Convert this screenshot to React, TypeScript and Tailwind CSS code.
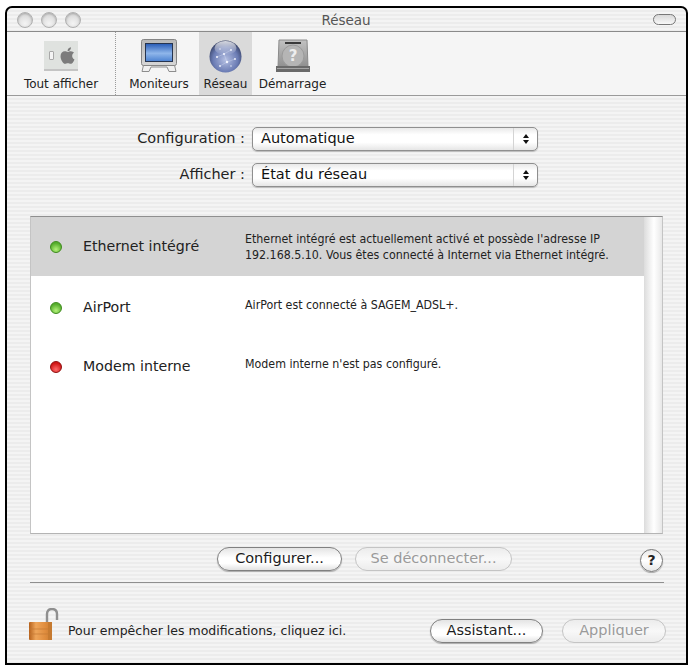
import React from "react";
import { FaApple } from "react-icons/fa";

const stripes = "bg-[repeating-linear-gradient(180deg,#f4f4f4_0px,#f4f4f4_2px,#ececec_2px,#ececec_4px)]";
const lucida = "font-['DejaVu_Sans',sans-serif]";

const TrafficDot = () => (
  <span className="w-[16px] h-[16px] rounded-full border border-[#b0b0b0] bg-[radial-gradient(circle_at_50%_75%,#f4f4f4,#cfcfcf)] shadow-[inset_0_1px_2px_#a8a8a8]" />
);

const PrefsIcon = () => (
  <div className="mb-[2px] w-[34px] h-[30px] bg-[#dfe2df] border-b-2 border-[#c4c4c4] flex items-center gap-[4px] pl-[5px]">
    <div className="w-[5px] h-[9px] border border-[#a8a8a8] bg-[#f4f4f4] rounded-[1px]" />
    <FaApple className="text-[#7c7c7c] w-[19px] h-[19px]" />
  </div>
);

const MonitorIcon = () => (
  <svg width="36" height="34" viewBox="0 0 36 34">
    <defs>
      <linearGradient id="scr" x1="0" y1="0" x2="0" y2="1">
        <stop offset="0" stopColor="#2c5fb8" />
        <stop offset="0.55" stopColor="#8fb6ea" />
        <stop offset="1" stopColor="#4f84d2" />
      </linearGradient>
      <linearGradient id="frm" x1="0" y1="0" x2="0" y2="1">
        <stop offset="0" stopColor="#b8b8b8" />
        <stop offset="1" stopColor="#d6d6d6" />
      </linearGradient>
    </defs>
    <path d="M3 24 L1 32.5 L8 32.5 L10 28 L26 28 L28 32.5 L35 32.5 L33 24 Z" fill="#f0f0f0" stroke="#8d8d8d" />
    <rect x="0.5" y="0.5" width="35" height="26" rx="2" fill="url(#frm)" stroke="#858585" />
    <rect x="4" y="4" width="28" height="19" fill="#26344f" />
    <rect x="5" y="5" width="26" height="17" fill="url(#scr)" />
  </svg>
);

const GlobeIcon = () => (
  <svg width="33" height="33" viewBox="0 0 33 33">
    <defs>
      <radialGradient id="glb" cx="0.5" cy="0.6" r="0.6">
        <stop offset="0" stopColor="#b4bfe2" />
        <stop offset="0.65" stopColor="#6b7cb4" />
        <stop offset="1" stopColor="#343e62" />
      </radialGradient>
      <linearGradient id="gls" x1="0" y1="0" x2="0" y2="1">
        <stop offset="0" stopColor="#fff" stopOpacity="0.8" />
        <stop offset="1" stopColor="#fff" stopOpacity="0" />
      </linearGradient>
    </defs>
    <circle cx="16.5" cy="16.5" r="16" fill="url(#glb)" />
    <ellipse cx="16.5" cy="8" rx="11" ry="7" fill="url(#gls)" />
    <path d="M8 17 L15 14 L22 10 M15 14 L18 22 L26 19 M18 22 L11 26" stroke="#e4e9fb" strokeWidth="0.3" fill="none" />
    <g fill="#f4f6ff">
      <circle cx="8" cy="17" r="1" />
      <circle cx="15" cy="14" r="1.1" />
      <circle cx="22" cy="10" r="0.9" />
      <circle cx="18" cy="22" r="1.2" />
      <circle cx="26" cy="19" r="0.9" />
      <circle cx="11" cy="26" r="0.9" />
      <circle cx="22" cy="26" r="0.7" />
      <circle cx="11" cy="9" r="0.7" />
    </g>
  </svg>
);

const DiskIcon = () => (
  <svg width="34" height="34" viewBox="0 0 34 34">
    <defs>
      <linearGradient id="dsk" x1="0" y1="0" x2="0" y2="1">
        <stop offset="0" stopColor="#c2c2c2" />
        <stop offset="1" stopColor="#8f8f8f" />
      </linearGradient>
    </defs>
    <path d="M3 1 L31 1 L32 28 L2 28 Z" fill="url(#dsk)" stroke="#8a8a8a" />
    <rect x="9" y="3" width="16" height="2" fill="#3a3a3a" />
    <circle cx="17" cy="17" r="11" fill="#b5b5b5" stroke="#9a9a9a" />
    <path d="M0 27 L34 27 L34 33 L0 33 Z" fill="#6a6a6a" />
    <path d="M1 29.5 L33 29.5" stroke="#a5a5a5" />
    <text x="17" y="22" textAnchor="middle" fontSize="15" fontWeight="700" fill="#ededed" fontFamily="DejaVu Sans, sans-serif">?</text>
  </svg>
);

const LockIcon = () => (
  <svg width="33" height="34" viewBox="0 0 33 34">
    <defs>
      <linearGradient id="brass" x1="0" y1="0" x2="1" y2="0">
        <stop offset="0" stopColor="#b5611c" />
        <stop offset="0.3" stopColor="#eea55a" />
        <stop offset="0.7" stopColor="#e08d3e" />
        <stop offset="1" stopColor="#c97a30" />
      </linearGradient>
    </defs>
    <path d="M19 16 L19 6 Q19 1 24 1 Q29 1 29 6 L29 12" fill="none" stroke="#8f8f8f" strokeWidth="2.4" />
    <rect x="1" y="14" width="23" height="18" rx="1" fill="url(#brass)" />
    <path d="M1 21 H24 M1 26 H24" stroke="#c47a35" strokeWidth="0.7" />
    <rect x="20" y="14" width="4" height="18" fill="#c67a30" />
  </svg>
);

const Tool = ({ width, label, icon, active }: { width: string; label: string; icon: React.ReactNode; active?: boolean }) => (
  <div className={`${width} h-full flex flex-col items-center ${active ? "bg-[#dadada]" : ""}`}>
    <div className="h-[41px] flex items-end justify-center">{icon}</div>
    <span className="mt-[4px] text-[12px] leading-[14px] text-[#222] whitespace-nowrap">{label}</span>
  </div>
);

const Select = ({ label, value }: { label: string; value: string }) => (
  <div className="flex items-center">
    <span className="w-[238px] text-right text-[14.5px] text-[#222] whitespace-nowrap">{label}</span>
    <div className="ml-[7px] w-[286px] h-[24px] rounded-[5px] border border-[#8f8f8f] shadow-[0_1px_1px_#bbb] bg-[linear-gradient(180deg,#e9e9e9_0%,#ffffff_30%,#ffffff_65%,#e6e6e6_100%)] flex items-center">
      <span className="flex-1 pl-[8px] text-[14.5px] text-[#111]">{value}</span>
      <div className="w-[24px] h-full border-l border-[#d4d4d4] flex flex-col items-center justify-center gap-[2px]">
        <span className="w-0 h-0 border-x-[3px] border-x-transparent border-b-[4px] border-b-[#111]" />
        <span className="w-0 h-0 border-x-[3px] border-x-transparent border-t-[4px] border-t-[#111]" />
      </div>
    </div>
  </div>
);

const Row = ({ name, color, lines, selected, shift }: { name: string; color: "green" | "red"; lines: string[]; selected?: boolean; shift?: boolean }) => (
  <div className={`h-[59px] flex items-center ${selected ? "bg-[#d4d4d4] h-[58px]" : ""} ${shift ? "pt-[5px]" : ""}`}>
    <span
      className={`ml-[19px] w-[12px] h-[12px] rounded-full border ${
        color === "green"
          ? "border-[#3d8a1c] bg-[radial-gradient(circle_at_50%_75%,#b4f27a,#55ad2c_70%)]"
          : "border-[#8e0c0c] bg-[radial-gradient(circle_at_50%_75%,#ff6a6a,#d01616_70%)]"
      }`}
    />
    <span className="ml-[21px] w-[162px] text-[14.2px] text-[#222]">{name}</span>
    <div className={`font-['DejaVu_Sans_Condensed','DejaVu_Sans',sans-serif] [font-stretch:condensed] text-[12.3px] leading-[16px] text-[#222] ${shift ? "mb-[6px]" : ""}`}>
      {lines.map(l => <div key={l} className="whitespace-nowrap">{l}</div>)}
    </div>
  </div>
);

const Pill = ({ label, width, disabled }: { label: string; width: string; disabled?: boolean }) => (
  <div
    className={`${width} h-[24px] rounded-full border flex items-center justify-center text-[14.5px] ${
      disabled
        ? "border-[#c4c4c4] text-[#9a9a9a] bg-[linear-gradient(180deg,#ececec_0%,#f8f8f8_50%,#ececec_100%)]"
        : "border-[#808080] text-[#1c1c1c] shadow-[0_1px_1px_#aaa] bg-[linear-gradient(180deg,#e4e4e4_0%,#ffffff_45%,#ffffff_70%,#e2e2e2_100%)]"
    }`}
  >
    {label}
  </div>
);

export default function App() {
  return (
    <div className={`w-[690px] h-[667px] bg-white pt-[6px] pl-[5px] pr-[2px] pb-[2px] ${lucida}`}>
      <div className={`h-full rounded-t-[7px] border-2 border-black flex flex-col overflow-hidden ${stripes}`}>
        {/* title bar */}
        <div className="h-[24px] shrink-0 border-b border-[#8a8a8a] flex items-center pl-[10px] pr-[10px]">
          <div className="flex gap-[8px]">
            <TrafficDot />
            <TrafficDot />
            <TrafficDot />
          </div>
          <span className="flex-1 pt-[2px] text-center text-[13.5px] text-[#555] pr-[42px]">Réseau</span>
          <span className="w-[23px] h-[11px] rounded-full border border-[#777] bg-[linear-gradient(180deg,#d8d8d8,#f8f8f8)]" />
        </div>

        {/* toolbar */}
        <div className="h-[64px] shrink-0 border-b border-[#9a9a9a] bg-[#f5f5f5] flex">
          <Tool width="w-[108px]" label="Tout afficher" icon={<PrefsIcon />} />
          <div className="w-0 h-full border-l border-dotted border-[#9a9a9a]" />
          <Tool width="w-[83px] pl-[3px]" label="Moniteurs" icon={<MonitorIcon />} />
          <Tool width="w-[53px]" label="Réseau" icon={<GlobeIcon />} active />
          <Tool width="w-[83px] pr-[2px]" label="Démarrage" icon={<DiskIcon />} />
        </div>

        {/* content */}
        <div className="flex-1 flex flex-col">
          <div className="mt-[31px] flex flex-col gap-[12px]">
            <Select label="Configuration :" value="Automatique" />
            <Select label="Afficher :" value="État du réseau" />
          </div>

          <div className="mt-[29px] ml-[23px] w-[633px] h-[318px] shrink-0 bg-white border-t border-x border-b border-t-[#8f8f8f] border-x-[#c4c4c4] border-b-[#b4b4b4] flex">
            <div className="flex-1">
              <Row
                selected
                name="Ethernet intégré"
                color="green"
                lines={[
                  "Ethernet intégré est actuellement activé et possède l'adresse IP",
                  "192.168.5.10. Vous êtes connecté à Internet via Ethernet intégré.",
                ]}
              />
              <Row shift name="AirPort" color="green" lines={["AirPort est connecté à SAGEM_ADSL+."]} />
              <Row shift name="Modem interne" color="red" lines={["Modem interne n'est pas configuré."]} />
            </div>
            <div className="w-[18px] bg-[linear-gradient(90deg,#dcdcdc,#ffffff_55%,#e8e8e8)]" />
          </div>

          <div className="mt-[12px] ml-[210px] flex items-center">
            <Pill label="Configurer..." width="w-[125px]" />
            <div className="ml-[13px]">
              <Pill label="Se déconnecter..." width="w-[157px]" disabled />
            </div>
            <div className="ml-[128px] mt-[3px] w-[23px] h-[23px] rounded-full border border-[#777] shadow-[0_1px_1px_#aaa] bg-[linear-gradient(180deg,#e8e8e8,#ffffff_50%,#e8e8e8)] flex items-center justify-center text-[14px] font-bold text-[#222]">
              ?
            </div>
          </div>

          <div className="mt-[10px] ml-[23px] w-[634px] h-px bg-[#8f8f8f]" />

          <div className="mt-[25px] ml-[21px] flex items-start">
            <LockIcon />
            <span className="ml-[7px] mt-[14px] w-[362px] text-[12.5px] text-[#222] whitespace-nowrap">
              Pour empêcher les modifications, cliquez ici.
            </span>
            <div className="mt-[11px]">
              <Pill label="Assistant..." width="w-[113px]" />
            </div>
            <div className="ml-[19px] mt-[11px]">
              <Pill label="Appliquer" width="w-[104px]" disabled />
            </div>
          </div>
        </div>
      </div>
    </div>
  );
}
